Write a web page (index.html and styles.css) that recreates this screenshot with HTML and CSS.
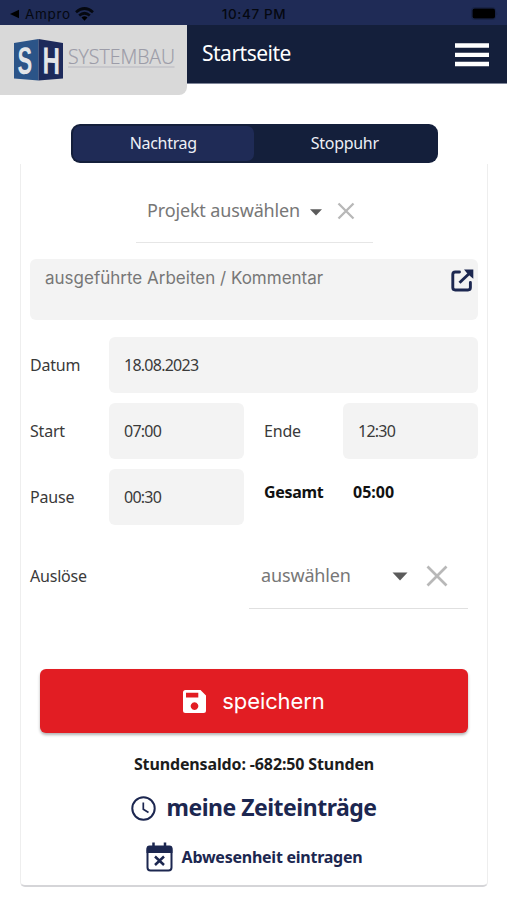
FILE: index.html
```html
<!DOCTYPE html>
<html lang="de">
<head>
<meta charset="utf-8">
<title>Startseite</title>
<link rel="stylesheet" href="styles.css">
</head>
<body>
<div class="status">
  <div class="status-left">
    <svg width="10" height="10" viewBox="0 0 10 10"><path d="M0 5L9 .8V9.2Z"/></svg>
    <span class="back">Ampro</span>
    <svg class="wifi" width="19" height="14" viewBox="0 0 19 14"><g fill="none" stroke="#050810" stroke-width="2.700"><path d="M1 5.200Q9.500-2.200 18 5.200M4.200 8.600Q9.500 3.900 14.800 8.600"/></g><path d="M6.500 10.600Q9.500 8 12.500 10.600L9.500 13.700Z"/></svg>
  </div>
  <span class="clock">10:47 PM</span>
  <svg class="battery" width="27" height="13" viewBox="0 0 27 13"><rect x=".5" y=".5" width="24" height="12" rx="3" fill="none" stroke="#192447"/><rect x="1.500" y="1.500" width="22.500" height="10" rx="2"/><path d="M25.500 4.500Q27 6.500 25.500 8.500Z" fill="#192447"/></svg>
</div>
<header class="header">
  <div class="logo">
    <svg width="187" height="70" viewBox="0 0 187 70">
      <path d="M14 18L38.500 14V55.500L14 53.500Z" fill="#2b5488"/>
      <path d="M38.500 14L63 18V53.500L38.500 55.500Z" fill="#1d2a5b"/>
      <text class="mark" transform="matrix(.58 -.04 0 1 17.500 49.300)">S</text>
      <text class="mark" transform="matrix(.64 .03 0 1 42.500 48.500)">H</text>
      <text class="brand" x="68" y="39" textLength="107" lengthAdjust="spacingAndGlyphs">SYSTEMBAU</text>
      <path d="M68 42H174.500" stroke="#b7b7bf"/>
    </svg>
  </div>
  <h1 class="title">Startseite</h1>
  <svg class="menu" width="34" height="24" viewBox="0 0 34 24"><path d="M0 2.500H34M0 11.800H34M0 21H34" stroke="#fff" stroke-width="4.300"/></svg>
</header>
<main class="main">
  <nav class="tabs">
    <div class="tab active">Nachtrag</div>
    <div class="tab">Stoppuhr</div>
  </nav>
  <section class="card">
    <div class="select project">
      <span class="ph">Projekt auswählen</span>
      <svg class="caret-s" width="12" height="7" viewBox="0 0 12 7"><path d="M0 .3H12L6 6.500Z" fill="#5b5b5b"/></svg>
      <svg width="18" height="18" viewBox="0 0 18 18"><path d="M1.500 1.500L16.500 16.500M16.500 1.500L1.500 16.500" stroke="#b8b8b8" stroke-width="2.300"/></svg>
    </div>
    <div class="comment">
      <span class="comment-ph">ausgeführte Arbeiten / Kommentar</span>
      <svg width="23" height="23" viewBox="0 0 23 23"><g fill="none" stroke="#1c2750" stroke-width="2.900"><path d="M8.500 3H4.200Q1.800 3 1.800 5.400V18.600Q1.800 21 4.200 21H17Q19.400 21 19.400 18.600V13.500" stroke-linecap="round"/><path d="M8.500 13.800L18.500 4.200"/></g><path d="M13 .5H22.300V9.700L19 7L15.700 3.700Z" fill="#1c2750"/></svg>
    </div>
    <div class="form">
      <label>Datum</label><div class="field wide">18.08.2023</div>
      <label>Start</label><div class="field">07:00</div>
      <label class="second">Ende</label><div class="field">12:30</div>
      <label>Pause</label><div class="field">00:30</div>
      <strong class="second total">Gesamt</strong><strong class="total sum">05:00</strong>
    </div>
    <div class="bonus">
      <label class="bonus-label">Auslöse</label>
      <div class="select extra">
        <span class="ph">auswählen</span>
        <svg class="caret" width="16" height="9" viewBox="0 0 16 9"><path d="M.5 .5H15.500L8 8.500Z" fill="#5b5b5b"/></svg>
        <svg width="22" height="22" viewBox="0 0 22 22"><path d="M1.500 1.500L20.500 20.500M20.500 1.500L1.500 20.500" stroke="#b8b8b8" stroke-width="2.700"/></svg>
      </div>
    </div>
    <div class="save">
      <svg width="23" height="23" viewBox="0 0 23 23"><path fill="#fff" fill-rule="evenodd" d="M2.500 0H17.500L23 5.500V20.500Q23 23 20.500 23H2.500Q0 23 0 20.500V2.500Q0 0 2.500 0ZM3 2.800V7.600H15.300V2.800ZM11.500 12.300A3.800 3.800 0 1 0 11.510 12.300Z"/></svg>
      <span>speichern</span>
    </div>
    <div class="saldo">Stundensaldo: -682:50 Stunden</div>
    <div class="link entries">
      <svg width="25" height="25" viewBox="0 0 25 25"><g fill="none" stroke="#1c2750" stroke-width="2"><circle cx="12.500" cy="12.500" r="11.200"/><path d="M12.300 6.500V13.200L17.500 16.500" stroke-width="1.700"/></g></svg>
      <span>meine Zeiteinträge</span>
    </div>
    <div class="link absence">
      <svg width="27" height="30" viewBox="0 0 27 30"><rect x="1.500" y="5" width="24" height="23.500" rx="3" fill="none" stroke="#1c2750" stroke-width="2"/><path d="M.5 11V6.500Q.5 3.500 3.500 3.500H23.500Q26.500 3.500 26.500 6.500V11Z" fill="#1c2750"/><path d="M7.500 .5V5M19 .5V5M9 14.500L18 23M18 14.500L9 23" stroke="#1c2750" stroke-width="2.500"/></svg>
      <span>Abwesenheit eintragen</span>
    </div>
  </section>
</main>
</body>
</html>
```

FILE: styles.css
```css
* { box-sizing: border-box; }
body { margin: 0; height: 900px; overflow: hidden; background: #fff; color: #3a3a3a; font-family: "Noto Sans", sans-serif; font-size: 16px; }
svg { display: block; flex: none; }
span, label, strong, .tab, .field, .saldo { white-space: nowrap; }
.status { display: grid; grid-template-columns: 1fr auto 1fr; align-items: center; height: 25px; padding: 2px 9px 0 10px; background: #1f2b56; color: #050810; font-family: Inter, sans-serif; font-size: 13px; }
.status-left { display: flex; align-items: center; gap: 5px; }
.back { letter-spacing: .7px; font-size: 13.500px; }
.wifi { margin-left: -1px; }
.clock { padding-right: 0; font-weight: 500; font-size: 13.500px; letter-spacing: .6px; }
.battery { justify-self: end; }
.header { display: flex; align-items: flex-start; height: 59px; background: #141f3b; border-bottom: 1px solid #7e8598; }
.logo { width: 187px; height: 70px; background: #d9d9d9; border-radius: 0 0 8px 0; }
.mark { font: 700 38px "Liberation Sans", sans-serif; fill: #e3e5e8; }
.brand { font: 300 20px "Open Sans", sans-serif; fill: #9c9ca8; stroke: #9c9ca8; stroke-width: .2px; }
.title { margin: 0 0 0 15px; font-size: 21px; line-height: 56px; font-weight: 400; color: #fff; letter-spacing: -.5px; }
.menu { margin: 18px 18px 0 auto; }
.main { padding: 40px 19px 0 20px; }
.tabs { display: grid; grid-template-columns: 1fr 1fr; width: 367px; height: 39px; margin: 0 auto 1px; padding: 2px; border-radius: 9px; background: #141f3b; color: #eef0f6; }
.tab { border-radius: 7px; text-align: center; line-height: 35px; letter-spacing: -.3px; }
.tab.active { background: #1f2b56; }
.card { height: 723px; padding: 16px 9px 0; border: 1px solid #eee; border-top: 0; border-bottom: 2px solid #d5d5d8; border-radius: 0 0 5px 5px; }
.select { display: flex; align-items: center; color: #777; font-size: 18px; letter-spacing: -.15px; }
.ph { margin-top: -2px; }
.project { width: 237px; height: 63px; margin-left: 106px; padding: 0 0 0 11px; border-bottom: 1px solid #e6e6e6; }
.caret-s { margin: 2px 15px 0 auto; }
.project svg:last-child { margin-right: 18px; }
.comment { display: flex; justify-content: space-between; height: 61px; margin-top: 16px; padding: 10px 4px 0 15px; border-radius: 6px; background: #f3f3f3; color: #777; }
.comment-ph { font-family: Inter, sans-serif; font-size: 17px; line-height: 19px; }
.form { display: grid; grid-template-columns: 79px 135px 99px 135px; grid-auto-rows: 56px; row-gap: 10px; margin-top: 17px; align-items: center; }
.field { height: 56px; padding-left: 15px; border-radius: 6px; background: #f3f3f3; line-height: 56px; letter-spacing: -.75px; }
.form label, .bonus-label { letter-spacing: -.2px; }
.wide { grid-column: span 3; }
.second { padding-left: 20px; }
.total { color: #111; padding-bottom: 10px; font-size: 16px; letter-spacing: -.3px; }
.sum { padding-left: 10px; letter-spacing: 0; }
.bonus { display: flex; justify-content: space-between; margin: 18px 10px 0 0; height: 66px; align-items: center; }
.extra { width: 219px; height: 66px; padding: 0 20px 0 12px; border-bottom: 1px solid #e0e0e0; }
.caret { margin: 2px 18px 0 auto; }
.save { display: flex; align-items: center; justify-content: center; gap: 16px; height: 64px; margin: 60px 10px 0 10px; border-radius: 6px; background: #e21d23; color: #fff; font-family: Inter, sans-serif; font-size: 22px; letter-spacing: -.1px; box-shadow: 0 2px 3px rgba(0,0,0,.3); }
.saldo { margin-top: 20px; line-height: 22px; text-align: center; font-weight: 700; color: #1c1c1c; letter-spacing: -.13px; }
.link { display: flex; align-items: center; justify-content: center; color: #1c2750; font-weight: 700; }
.entries { gap: 10px; height: 30px; margin-top: 18px; font-size: 23px; letter-spacing: -.5px; }
.entries span { margin-top: -3px; }
.absence { gap: 9px; height: 32px; margin-top: 18px; font-size: 16px; letter-spacing: -.25px; }
```
